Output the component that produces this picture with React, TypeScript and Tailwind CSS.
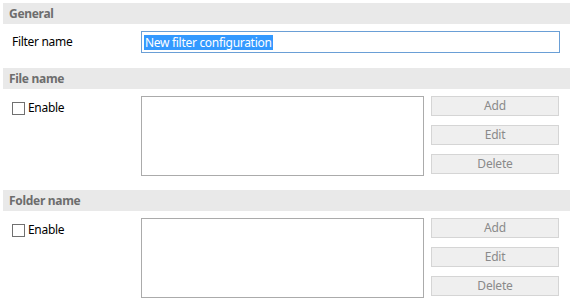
import React from 'react';

const font = { fontFamily: '"Noto Sans", "Open Sans", sans-serif' };

const SectionHeader = ({ title }: { title: string }) => (
  <div className="h-[21px] bg-[#e9e9e9] pl-[6px] flex items-center text-[12px] font-bold text-[#6d6d6d] tracking-[-0.3px]">
    {title}
  </div>
);

const Checkbox = ({ label }: { label: string }) => (
  <label className="flex items-center gap-[3px] pl-[9px] pt-[3px] text-[12px] text-black tracking-[-0.3px]">
    <span className="w-[13px] h-[13px] border border-[#707070] bg-white" />
    <span>{label}</span>
  </label>
);

const ActionButton = ({ label }: { label: string }) => (
  <button
    disabled
    className="h-[20px] w-[128px] bg-[#efefef] border border-[#d5d5d5] text-[12px] text-[#8a8a8a] tracking-[-0.2px] flex items-center justify-center"
  >
    {label}
  </button>
);

const ListSection = ({ title, mt }: { title: string; mt: string }) => (
  <div className={mt}>
    <SectionHeader title={title} />
    <div className="flex mt-[7px]">
      <div className="w-[138px]">
        <Checkbox label="Enable" />
      </div>
      <div className="w-[283px] h-[80px] border border-[#ababab] bg-white" />
      <div className="ml-[7px] flex flex-col gap-[9px]">
        <ActionButton label="Add" />
        <ActionButton label="Edit" />
        <ActionButton label="Delete" />
      </div>
    </div>
  </div>
);

export default function App() {
  return (
    <div className="w-[573px] h-[301px] bg-white pt-[3px] pl-[3px] pr-[3px] overflow-hidden" style={font}>
      <SectionHeader title="General" />
      <div className="flex items-center mt-[7px] h-[22px]">
        <div className="w-[138px] pl-[9px] text-[12px] text-black tracking-[-0.3px]">Filter name</div>
        <div className="w-[419px] h-[22px] border border-[#6a9fd6] bg-white flex items-center pl-[2px]">
          <span className="bg-[#3399ff] text-white text-[12px] leading-[15px] px-[1px] tracking-[-0.3px]">
            New filter configuration
          </span>
        </div>
      </div>
      <ListSection title="File name" mt="mt-[15px]" />
      <ListSection title="Folder name" mt="mt-[14px]" />
    </div>
  );
}
